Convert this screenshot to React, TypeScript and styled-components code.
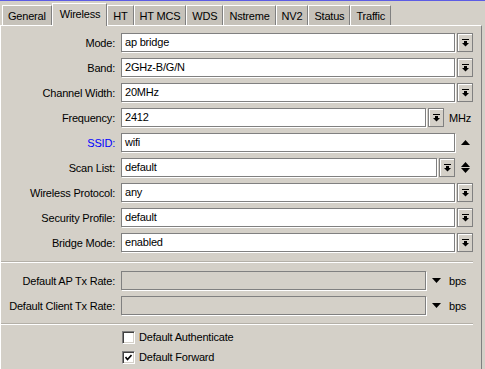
import React from 'react';
import styled, { createGlobalStyle } from 'styled-components';

const GlobalStyle = createGlobalStyle`
  html, body {
    margin: 0;
    padding: 0;
    background: #d4d0c8;
  }
  body {
    font-family: "Liberation Sans", Arial, sans-serif;
    font-size: 11px;
    letter-spacing: -0.2px;
    color: #000;
  }
`;

const Window = styled.div`
  width: 485px;
  height: 369px;
  overflow: hidden;
  background: #d4d0c8;
  border-top: 1px solid #5c5ce4;
  box-sizing: border-box;
`;

const TabStrip = styled.div`
  display: flex;
  align-items: flex-end;
  height: 22px;
  padding: 2px 0 0 2px;
`;

const Tab = styled.div<{ $active?: boolean }>`
  box-sizing: border-box;
  height: ${(p) => (p.$active ? '22px' : '20px')};
  padding: ${(p) => (p.$active ? '3px 6px 0 7px' : '3px 5px 0 5px')};
  background: ${(p) => (p.$active ? '#d4d0c8' : '#c6c2ba')};
  border-top: 1px solid #fff;
  border-left: 1px solid #fff;
  border-right: 1px solid #808080;
  white-space: nowrap;
  line-height: 14px;
  position: relative;
  z-index: ${(p) => (p.$active ? 1 : 0)};
  margin-bottom: ${(p) => (p.$active ? '-1px' : '0')};
  height: ${(p) => (p.$active ? '23px' : '20px')};
`;

const Panel = styled.div`
  width: 482px;
  box-sizing: border-box;
  border-top: 1px solid #fff;
  border-left: 1px solid #fff;
  border-right: 1px solid #808080;
  padding: 7px 8px 0 0;
  height: 400px;
  display: flex;
  flex-direction: column;
`;

const Section = styled.div`
  display: flex;
  flex-direction: column;
  gap: 6px;
`;

const Row = styled.div`
  display: flex;
  align-items: center;
  height: 19px;
`;

const Label = styled.div<{ $link?: boolean }>`
  width: 114px;
  margin-right: 6px;
  text-align: right;
  white-space: nowrap;
  color: ${(p) => (p.$link ? '#0000ff' : '#000')};
`;

const Field = styled.div<{ $disabled?: boolean }>`
  flex: 1;
  height: 19px;
  box-sizing: border-box;
  background: ${(p) => (p.$disabled ? '#d4d0c8' : '#fff')};
  border: 1px solid #808080;
  box-shadow: 1px 1px 0 #fff;
  padding: 0 3px;
  line-height: 17px;
  white-space: nowrap;
  overflow: hidden;
`;

const DropButton = styled.div`
  width: 16px;
  height: 19px;
  margin-left: 2px;
  box-sizing: border-box;
  border: 1px solid #808080;
  box-shadow: inset 1px 1px 0 #fff;
  background: #d4d0c8;
  display: flex;
  align-items: center;
  justify-content: center;
`;

const IconSlot = styled.div`
  width: 18px;
  height: 19px;
  display: flex;
  align-items: center;
  justify-content: center;
  padding-left: 2px;
  box-sizing: border-box;
`;

const Unit = styled.div`
  width: 29px;
  padding-left: 5px;
  box-sizing: border-box;
  white-space: nowrap;
`;

const Divider = styled.div<{ $top: number; $bottom: number }>`
  height: 1px;
  border-top: 1px solid #b4b0a8;
  border-bottom: 1px solid #fff;
  margin: ${(p) => `${p.$top}px 0 ${p.$bottom}px 0`};
  height: 0;
`;

const CheckRow = styled.label`
  display: flex;
  align-items: center;
  height: 20px;
  padding-left: 121px;
  gap: 4px;
  white-space: nowrap;
`;

const CheckBox = styled.span`
  width: 13px;
  height: 13px;
  box-sizing: border-box;
  background: #fff;
  border-top: 1px solid #808080;
  border-left: 1px solid #808080;
  border-right: 1px solid #fff;
  border-bottom: 1px solid #fff;
  box-shadow: inset 1px 1px 0 #404040, inset -1px -1px 0 #d4d0c8;
  display: flex;
  align-items: center;
  justify-content: center;
`;

const DropIcon = () => (
  <svg width="7" height="8" viewBox="0 0 7 8">
    <rect x="0" y="0" width="7" height="1" fill="#000" />
    <rect x="2" y="2" width="3" height="2" fill="#000" />
    <polygon points="0,4 7,4 3.5,7.5" fill="#000" />
  </svg>
);

const DownArrow = () => (
  <svg width="9" height="5" viewBox="0 0 9 5">
    <polygon points="0,0 9,0 4.5,5" fill="#000" />
  </svg>
);

const UpArrow = () => (
  <svg width="9" height="5" viewBox="0 0 9 5">
    <polygon points="0,5 9,5 4.5,0" fill="#000" />
  </svg>
);

const UpDownArrow = () => (
  <svg width="9" height="11" viewBox="0 0 9 11">
    <polygon points="0,5 9,5 4.5,0" fill="#000" />
    <polygon points="0,6 9,6 4.5,11" fill="#000" />
  </svg>
);

const CheckMark = () => (
  <svg width="7" height="7" viewBox="0 0 7 7">
    <polyline points="0.5,3 2.5,5.5 6.5,1" fill="none" stroke="#000" strokeWidth="1.6" />
  </svg>
);

const tabs = ['General', 'Wireless', 'HT', 'HT MCS', 'WDS', 'Nstreme', 'NV2', 'Status', 'Traffic'];

const selects = [
  { label: 'Mode:', value: 'ap bridge' },
  { label: 'Band:', value: '2GHz-B/G/N' },
  { label: 'Channel Width:', value: '20MHz' },
];

const lowerSelects = [
  { label: 'Wireless Protocol:', value: 'any' },
  { label: 'Security Profile:', value: 'default' },
  { label: 'Bridge Mode:', value: 'enabled' },
];

const App: React.FC = () => {
  return (
    <>
      <GlobalStyle />
      <Window>
        <TabStrip>
          {tabs.map((t) => (
            <Tab key={t} $active={t === 'Wireless'}>
              {t}
            </Tab>
          ))}
        </TabStrip>
        <Panel>
          <Section>
            {selects.map((s) => (
              <Row key={s.label}>
                <Label>{s.label}</Label>
                <Field>{s.value}</Field>
                <DropButton><DropIcon /></DropButton>
              </Row>
            ))}
            <Row>
              <Label>Frequency:</Label>
              <Field>2412</Field>
              <DropButton><DropIcon /></DropButton>
              <Unit>MHz</Unit>
            </Row>
            <Row>
              <Label $link>SSID:</Label>
              <Field>wifi</Field>
              <IconSlot><UpArrow /></IconSlot>
            </Row>
            <Row>
              <Label>Scan List:</Label>
              <Field>default</Field>
              <DropButton><DropIcon /></DropButton>
              <IconSlot><UpDownArrow /></IconSlot>
            </Row>
            {lowerSelects.map((s) => (
              <Row key={s.label}>
                <Label>{s.label}</Label>
                <Field>{s.value}</Field>
                <DropButton><DropIcon /></DropButton>
              </Row>
            ))}
          </Section>
          <Divider $top={9} $bottom={8} />
          <Section>
            <Row>
              <Label>Default AP Tx Rate:</Label>
              <Field $disabled />
              <IconSlot><DownArrow /></IconSlot>
              <Unit>bps</Unit>
            </Row>
            <Row>
              <Label>Default Client Tx Rate:</Label>
              <Field $disabled />
              <IconSlot><DownArrow /></IconSlot>
              <Unit>bps</Unit>
            </Row>
          </Section>
          <Divider $top={8} $bottom={2} />
          <CheckRow>
            <CheckBox />
            Default Authenticate
          </CheckRow>
          <CheckRow>
            <CheckBox><CheckMark /></CheckBox>
            Default Forward
          </CheckRow>
        </Panel>
      </Window>
    </>
  );
};

export default App;
